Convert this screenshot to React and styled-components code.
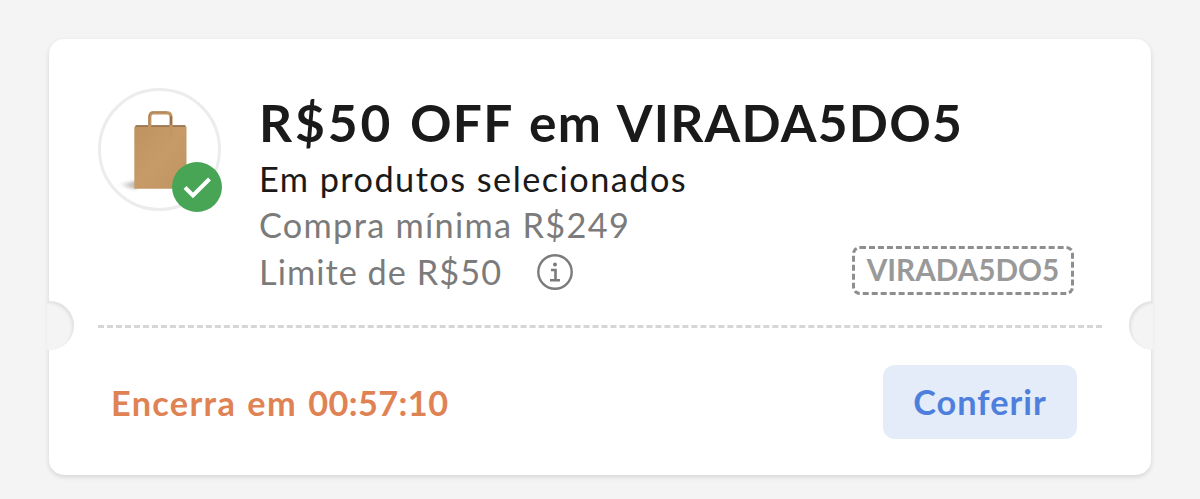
import React from 'react';
import styled, { createGlobalStyle } from 'styled-components';

const GlobalStyle = createGlobalStyle`
  * { box-sizing: border-box; }
  body {
    margin: 0;
    background: #f4f4f4;
    font-family: Lato, "Open Sans", sans-serif;
  }
`;

const Page = styled.main`
  height: 499px;
  padding: 39px 49px 24px;
  overflow: hidden;
`;

const Card = styled.article`
  position: relative;
  height: 436px;
  display: flex;
  flex-direction: column;
  background: #fff;
  border-radius: 15px;
  box-shadow: 0 2px 5px rgba(0, 0, 0, 0.13);
`;

const Notch = styled.span`
  position: absolute;
  top: 262px;
  ${({ $side }) => $side}: -2px;
  width: ${({ $side }) => ($side === 'left' ? 27 : 24)}px;
  height: 49px;
  background: #f4f4f4;
  border-radius: ${({ $side }) => ($side === 'left' ? '0 25px 25px 0' : '25px 0 0 25px')};
  box-shadow: inset ${({ $side }) => ($side === 'left' ? '-2px' : '2px')} 2px 3px rgba(0, 0, 0, 0.08);
`;

const Details = styled.section`
  height: 289px;
  margin: 0 49px;
  padding-top: 49px;
  display: flex;
  border-bottom: 3px dashed #d6d6d6;
`;

const Thumb = styled.div`
  position: relative;
  flex: none;
  width: 123px;
  height: 123px;
  border: 3px solid #ececec;
  border-radius: 50%;
`;

const BagArt = styled.svg`
  display: block;
  width: 117px;
  height: 117px;
`;

const CheckBadge = styled.span`
  position: absolute;
  right: -4px;
  bottom: -4px;
  width: 50px;
  height: 50px;
  border-radius: 50%;
  background: #48a556;
  svg { display: block; }
`;

const Info = styled.div`
  flex: 1;
  min-width: 0;
  margin-left: 38px;
  white-space: nowrap;
`;

const Title = styled.h1`
  margin: 0;
  height: 68px;
  font-size: 51.5px;
  line-height: 69px;
  font-weight: 700;
  letter-spacing: 1.2px;
  word-spacing: 3px;
  color: #1a1a1a;
`;

const Amount = styled.span`
  letter-spacing: 2.9px;
`;

const Line = styled.p`
  margin: 0;
  display: flex;
  align-items: center;
  height: 46.3px;
  font-size: 34.3px;
  line-height: 46.3px;
  letter-spacing: ${({ $spacing }) => $spacing}px;
  color: ${({ $muted }) => ($muted ? '#7b7b7b' : '#1a1a1a')};
`;

const InfoIcon = styled.svg`
  width: 38px;
  height: 38px;
  margin-left: 34px;
`;

const CouponCode = styled.div`
  flex: none;
  align-self: flex-end;
  width: 222px;
  height: 49px;
  margin: 0 28px 30px -222px;
  border: 3px dashed #8e8e8e;
  border-radius: 8px;
  text-align: center;
  font-size: 29.7px;
  line-height: 42px;
  font-weight: 700;
  color: #999;
`;

const Footer = styled.footer`
  flex: 1;
  display: flex;
  align-items: flex-start;
  justify-content: space-between;
  padding: 37px 74px 0 62px;
`;

const Timer = styled.p`
  margin: 0;
  height: 74px;
  font-size: 34.3px;
  line-height: 75px;
  font-weight: 700;
  letter-spacing: 1.3px;
  word-spacing: 1.6px;
  white-space: nowrap;
  color: #df8254;
`;

const Countdown = styled.span`
  letter-spacing: 0.4px;
`;

const Action = styled.button`
  width: 194px;
  height: 74px;
  padding: 0;
  border: 0;
  border-radius: 12px;
  background: #e4ecf9;
  font: 700 34.3px/74px Lato, "Open Sans", sans-serif;
  letter-spacing: 1px;
  color: #4f7fdc;
`;

function Bag() {
  return (
    <BagArt viewBox="101 91 117 117">
      <defs>
        <linearGradient id="paper" x1="0" x2="1" y1="0" y2="1">
          <stop offset="0" stopColor="#bf925f" />
          <stop offset="0.5" stopColor="#c79b68" />
          <stop offset="1" stopColor="#c09460" />
        </linearGradient>
        <linearGradient id="shade" x1="0" x2="1">
          <stop offset="0" stopColor="#777" stopOpacity="0" />
          <stop offset="1" stopColor="#655a50" stopOpacity="0.5" />
        </linearGradient>
        <filter id="soft" x="-20%" y="-50%" width="140%" height="200%">
          <feGaussianBlur stdDeviation="1.5" />
        </filter>
      </defs>
      <path d="M117 184 L136 181 L137 189 L128 188 Z" fill="url(#shade)" filter="url(#soft)" />
      <path d="M136 125.500 H185 L186.500 127.500 V188.700 H134.300 V127.500 Z" fill="url(#paper)" />
      <path d="M135.500 126 H185.500" stroke="#8f6d4d" strokeWidth="1.500" />
      <path d="M149.800 137 V117 Q149.800 112.800 153 112.800 H167 Q171 112.800 171 117 V137" fill="none" stroke="#c4965f" strokeWidth="3.200" />
      <path d="M149 125 V117 Q149.500 112 153 112 H167" fill="none" stroke="#9d7d5d" strokeWidth="1" />
      <path d="M171 116 V125" stroke="#967253" strokeWidth="2" />
    </BagArt>
  );
}

export default function App() {
  return (
    <>
      <GlobalStyle />
      <Page>
        <Card>
          <Details>
            <Thumb>
              <Bag />
              <CheckBadge>
                <svg width="50" height="50" viewBox="0 0 50 50">
                  <path d="M13 25.500 L21 33.500 L37.500 17" fill="none" stroke="#fff" strokeWidth="4" />
                </svg>
              </CheckBadge>
            </Thumb>
            <Info>
              <Title><Amount>R$50</Amount> OFF em VIRADA5DO5</Title>
              <Line $spacing={1.45}>Em produtos selecionados</Line>
              <Line $muted $spacing={1.3}>Compra mínima R$249</Line>
              <Line $muted $spacing={1.03}>
                Limite de R$50
                <InfoIcon viewBox="0 0 38 38" fill="none" stroke="#7b7b7b">
                  <circle cx="19" cy="19" r="16.700" strokeWidth="2.400" />
                  <path d="M15 17 H19.500 V27 M14 27.200 H24" strokeWidth="2.600" />
                  <circle cx="19" cy="11.500" r="2" fill="#7b7b7b" stroke="none" />
                </InfoIcon>
              </Line>
            </Info>
            <CouponCode>VIRADA5DO5</CouponCode>
          </Details>
          <Footer>
            <Timer>Encerra em <Countdown>00:57:10</Countdown></Timer>
            <Action type="button">Conferir</Action>
          </Footer>
          <Notch $side="left" />
          <Notch $side="right" />
        </Card>
      </Page>
    </>
  );
}
